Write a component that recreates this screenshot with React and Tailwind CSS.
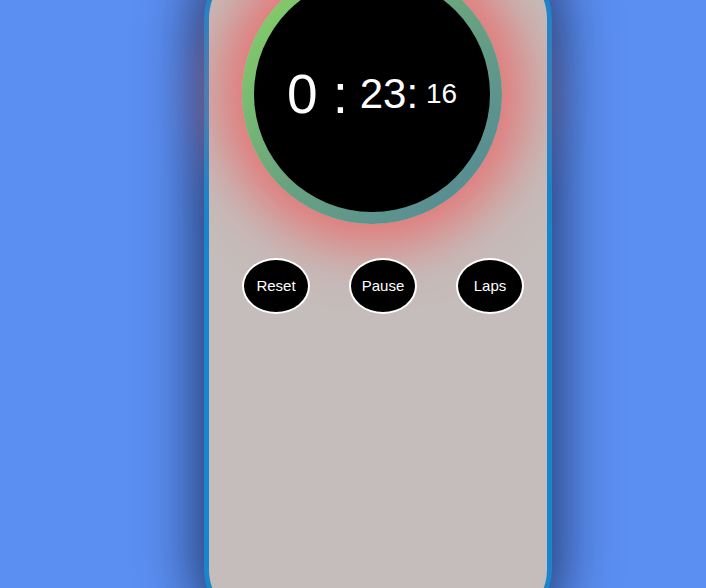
import React from 'react';

// Stopwatch screen: phone frame, glowing dial and three round controls.

function Dial() {
  return (
    <div className="w-[260px] h-[260px] rounded-full p-[12px] bg-gradient-to-br from-[#8cd85c] via-[#6aa37e] to-[#528499] shadow-[0_0_55px_22px_rgba(236,100,100,0.85)]">
      <div className="w-full h-full rounded-full bg-black flex items-center justify-center text-white whitespace-pre leading-none">
        <span className="text-[55px]">0 :</span>
        <span className="text-[42px]"> 23:</span>
        <span className="text-[28px]"> 16</span>
      </div>
    </div>
  );
}

function RoundButton({ label }) {
  return (
    <button className="w-[68px] h-[56px] rounded-[50%] bg-black border-2 border-white text-white text-[15px] flex items-center justify-center">
      {label}
    </button>
  );
}

export default function App() {
  return (
    <div
      className="h-screen w-full overflow-hidden bg-[#5b8ff2] flex items-center justify-center"
      style={{ fontFamily: '"Liberation Sans", Arial, sans-serif' }}
    >
      <div className="shrink-0 ml-[50px] w-[348px] h-[670px] rounded-[60px] border-[5px] border-[#1a85cc] bg-[#c5bdbb] shadow-[0_0_55px_8px_rgba(10,20,50,0.7)] pl-[33px]">
        <Dial />
        <div className="flex gap-[39px] mt-[34px]">
          <RoundButton label="Reset" />
          <RoundButton label="Pause" />
          <RoundButton label="Laps" />
        </div>
      </div>
    </div>
  );
}
